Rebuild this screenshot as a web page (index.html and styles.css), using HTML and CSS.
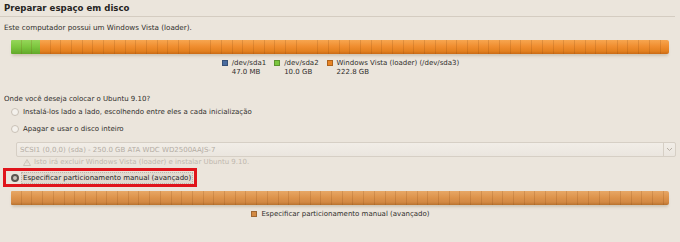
FILE: index.html
```html
<!DOCTYPE html>
<html lang="pt">
<head>
<meta charset="utf-8">
<title>Preparar espaço em disco</title>
<link rel="stylesheet" href="styles.css">
</head>
<body>
<div class="page">
  <div class="title">Preparar espaço em disco</div>
  <div class="sep"></div>
  <div class="desc">Este computador possui um Windows Vista (loader).</div>

  <div class="bar">
    <div class="seg green" style="width:29px"></div>
    <div class="seg orange flex1"></div>
  </div>
  <div class="legend">
    <div class="litem"><span class="sw blue"></span><div class="ltext"><div>/dev/sda1</div><div>47.0 MB</div></div></div>
    <div class="litem"><span class="sw greensw"></span><div class="ltext"><div>/dev/sda2</div><div>10.0 GB</div></div></div>
    <div class="litem"><span class="sw orangesw"></span><div class="ltext"><div>Windows Vista (loader) (/dev/sda3)</div><div>222.8 GB</div></div></div>
  </div>

  <div class="question">Onde você deseja colocar o Ubuntu 9.10?</div>
  <div class="radio r1"><span class="dot"></span><span>Instalá-los lado a lado, escolhendo entre eles a cada inicialização</span></div>
  <div class="radio r2"><span class="dot"></span><span>Apagar e usar o disco inteiro</span></div>
  <div class="combo"><span class="ctext">SCSI1 (0,0,0) (sda) - 250.0 GB ATA WDC WD2500AAJS-7</span><span class="carrow"><svg width="7" height="5" viewBox="0 0 7 5"><path d="M1 1 L3.5 3.5 L6 1" fill="none" stroke="#b8b0a6" stroke-width="1"/></svg></span></div>
  <div class="warn"><svg class="wicon" width="8" height="7" viewBox="0 0 8 7"><path d="M4 0.5 L7.5 6.5 L0.5 6.5 Z" fill="none" stroke="#cbc3b8" stroke-width="1"/><path d="M4 2.5 V4.5" stroke="#cbc3b8" stroke-width="0.8"/></svg><span>Isto irá excluir Windows Vista (loader) e instalar Ubuntu 9.10.</span></div>
  <div class="highlight">
    <span class="dot sel"></span><span class="focus">Especificar particionamento manual (avançado)</span>
  </div>

  <div class="bar bar2">
    <div class="seg tan flex1"></div>
  </div>
  <div class="legend legend2">
    <div class="litem"><span class="sw tansw"></span><div class="ltext"><div>Especificar particionamento manual (avançado)</div></div></div>
  </div>
</div>
</body>
</html>
```

FILE: styles.css
```css
html, body {
  margin: 0;
  padding: 0;
}
body {
  width: 680px;
  height: 242px;
  overflow: hidden;
  background: #ebe5dc;
  font-family: "DejaVu Sans", "Liberation Sans", sans-serif;
  font-size: 7px;
  color: #302e2b;
}
.page {
  padding: 0 5px 0 4px;
}
.title {
  font-weight: bold;
  font-size: 8.6px;
  line-height: 16px;
  height: 16px;
  color: #26241f;
}
.sep {
  height: 1px;
  background: #d4ccc1;
  margin-left: -4px;
}
.desc {
  margin-top: 5px;
  line-height: 12px;
  height: 12px;
  font-size: 7.2px;
}
.bar {
  display: flex;
  margin: 6px 6px 0 7px;
  height: 14px;
  border-radius: 1px 2px 2px 1px;
  overflow: hidden;
  box-shadow: 0 3px 3px -1px rgba(110, 80, 40, 0.22);
}
.seg {
  height: 100%;
  background-image:
    repeating-linear-gradient(90deg, transparent 0, transparent 9.7px, rgba(120, 60, 10, 0.18) 9.7px, rgba(120, 60, 10, 0.18) 10.7px),
    var(--grad);
}
.flex1 { flex: 1; }
.green {
  --grad: linear-gradient(#96d65a, #7cc63e 50%, #62a82a);
}
.orange {
  --grad: linear-gradient(#f7a650, #f08e30 45%, #e3801f 80%, #c96a16);
}
.tan {
  --grad: linear-gradient(#e7a766, #de944c 45%, #d28843 80%, #b7722f);
}
.legend {
  display: flex;
  justify-content: center;
  gap: 8px;
  margin-top: 5px;
  padding-left: 2px;
  line-height: 9px;
  height: 18px;
}
.litem {
  display: flex;
  align-items: flex-start;
  gap: 4px;
}
.sw {
  width: 6px;
  height: 6px;
  margin-top: 1px;
  border: 0.5px solid rgba(0,0,0,0.25);
  box-sizing: border-box;
  flex: none;
}
.blue { background: #4a6b9e; }
.greensw { background: #7cc63e; }
.orangesw { background: #e88426; }
.tansw { background: #d38a44; }
.question {
  margin-top: 16px;
  line-height: 12px;
  height: 12px;
}
.radio {
  display: flex;
  align-items: center;
  gap: 4px;
  padding-left: 7px;
  line-height: 12px;
  height: 12px;
}
.r1 { margin-top: 1px; }
.r2 { margin-top: 5px; }
.dot {
  width: 6px;
  height: 6px;
  border-radius: 50%;
  border: 1px solid #c9c1b6;
  background: #f4f1ec;
  flex: none;
}
.dot.sel {
  border: 2px solid #5a5650;
  width: 4px;
  height: 4px;
  background: #c8c2ba;
}
.combo {
  display: flex;
  align-items: center;
  margin: 7px -1px 0 12px;
  height: 15px;
  box-sizing: border-box;
  border: 1px solid #d6cfc5;
  border-radius: 2px;
  background: linear-gradient(#f1ede7, #ebe6df);
  color: #b4ada4;
  padding-left: 3px;
}
.ctext { flex: 1; }
.carrow {
  width: 11px;
  height: 13px;
  border-left: 1px solid #d6cfc5;
  display: flex;
  align-items: center;
  justify-content: center;
}
.warn {
  display: flex;
  align-items: center;
  gap: 3px;
  padding-left: 19px;
  height: 11px;
  line-height: 11px;
  color: #bfb8ae;
}
.highlight {
  display: inline-flex;
  align-items: center;
  gap: 2px;
  margin-left: -1px;
  height: 19px;
  box-sizing: border-box;
  border: 3px solid #e0141b;
  padding: 0 1px 0 5px;
  white-space: nowrap;
}
.focus {
  background: #e0d9cf;
  border: 1px dotted #bdb5aa;
  padding: 0 1px;
  line-height: 10px;
  color: #26241f;
}
.bar2 {
  margin-top: 4px;
}
.legend2 {
  margin-top: 5px;
  height: 10px;
}
```
